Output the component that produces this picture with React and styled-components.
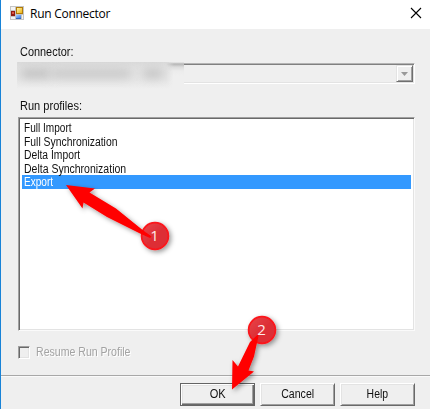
import React from 'react';
import styled, { createGlobalStyle } from 'styled-components';

const GlobalStyle = createGlobalStyle`
  * { box-sizing: border-box; }
  body { margin: 0; background: #efefef; overflow: hidden; }
`;

const Dialog = styled.div`
  position: relative;
  display: flex;
  flex-direction: column;
  width: 430px;
  height: 409px;
  border-left: 1px solid #1883d7;
  background: #efefef;
  color: #111;
  font: 12px/14px 'Liberation Sans', Arial, sans-serif;
`;

const TitleBar = styled.header`
  display: flex;
  align-items: center;
  height: 29px;
  padding: 0 8px 3px 9px;
  background: #fff;
`;

const Title = styled.h1`
  flex: 1;
  margin: 2px 0 0 6px;
  color: #000;
  font: 12px/16px 'Open Sans', 'Noto Sans', sans-serif;
  letter-spacing: -0.27px;
`;

const CloseButton = styled.button`
  display: flex;
  padding: 0;
  border: 0;
  background: none;
`;

/* Condensed caption, close to the narrow system face of classic dialogs. */
const Caption = styled.span`
  display: inline-block;
  white-space: nowrap;
  transform: scaleX(${(p) => p.$stretch});
  transform-origin: ${(p) => (p.$centered ? 'center' : 'left')};
`;

const Content = styled.main`
  display: flex;
  flex-direction: column;
  height: 347px;
  padding: 16px 15px 0 17px;
  border-bottom: 1px solid #a8a8a8;
  box-shadow: 0 1px #fafafa;
`;

const Label = styled.div`
  height: 14px;
  padding-left: 2px;
`;

const Combo = styled.div`
  position: relative;
  display: flex;
  justify-content: flex-end;
  height: 21px;
  margin: 4px 0 15px;
  border: 1px solid;
  border-color: #b4b4b4 #fff #fff #a0a0a0;
  box-shadow: inset 1px 1px #808080, inset -1px -1px #e3e3e3;
`;

const ComboArrow = styled.div`
  display: flex;
  align-items: center;
  justify-content: center;
  width: 17px;
  height: 17px;
  margin: 1px 1px 0 0;
  border: 1px solid;
  border-color: #e3e3e3 #6f6f6f #6f6f6f #e3e3e3;
  box-shadow: inset 1px 1px #fff, inset -1px -1px #a0a0a0;
`;

const Redaction = styled.div`
  position: absolute;
  left: -2px;
  top: -2px;
  width: 167px;
  height: 28px;
  overflow: hidden;
  background: linear-gradient(#dadada 0, #e1e1e1 6px, #e6e6e6 18px, #efefef 27px);
`;

const RedactionEdge = styled.div`
  position: absolute;
  right: 0;
  top: 0;
  width: 18px;
  height: 28px;
  background: linear-gradient(#efefef 0, #b5b5b5 2px, #dcdcdc 5px, #ececec 9px, #efefef 14px);
  mask-image: linear-gradient(90deg, transparent, #000 8px);
`;

const Smudge = styled.div`
  position: absolute;
  left: ${(p) => p.$left}px;
  top: 7px;
  width: ${(p) => p.$width}px;
  height: 9px;
  border-radius: 4px;
  background: ${(p) => p.$tone};
  filter: blur(5px);
`;

const List = styled.ul`
  height: 214px;
  margin: 4px 0 0;
  padding: 3px 3px 2px;
  list-style: none;
  border: 1px solid;
  border-color: #a0a0a0 #fafafa #fafafa #a0a0a0;
  background: #fff;
  box-shadow: inset 1px 1px #696969, inset -1px -1px #e3e3e3;
`;

const Item = styled.li`
  height: 13.6px;
  padding-left: 2px;
  line-height: 14px;
  color: ${(p) => (p.$selected ? '#fff' : '#111')};
  background: ${(p) => (p.$selected ? '#3399ff' : 'transparent')};
`;

const CheckRow = styled.label`
  display: flex;
  align-items: center;
  gap: 6px;
  margin-top: 14px;
  color: #a3a3a3;
  text-shadow: 1px 1px #fff;
`;

const CheckBox = styled.span`
  width: 12px;
  height: 13px;
  border: 1px solid;
  border-color: #a0a0a0 #fff #fff #a0a0a0;
  box-shadow: inset 1px 1px #696969, inset -1px -1px #e3e3e3;
`;

const Footer = styled.footer`
  display: flex;
  justify-content: flex-end;
  gap: 5px;
  padding: 7px 15px 0 0;
`;

const Button = styled.button`
  width: 75px;
  height: 23px;
  padding: 0 0 1px;
  border: 1px solid;
  border-color: ${(p) => (p.$primary ? '#646464' : '#fff #696969 #696969 #fff')};
  background: #efefef;
  color: #111;
  font: 12px/14px 'Liberation Sans', Arial, sans-serif;
  box-shadow: ${(p) =>
    p.$primary
      ? 'inset 1px 1px #fff, inset -1px -1px #696969, inset -2px -2px #a0a0a0, inset 2px 2px #e3e3e3'
      : 'inset 1px 1px #e3e3e3, inset -1px -1px #a0a0a0'};
`;

const Annotations = styled.svg`
  position: absolute;
  left: -1px;
  top: 0;
  pointer-events: none;
`;

const profiles = [
  ['Full Import', 0.84],
  ['Full Synchronization', 0.865],
  ['Delta Import', 0.86],
  ['Delta Synchronization', 0.875],
  ['Export', 0.84],
];

function AppIcon() {
  return (
    <svg width="14" height="14" viewBox="0 0 14 14" shapeRendering="crispEdges">
      <defs>
        <linearGradient id="gold" x2="1" y2="1"><stop stopColor="#fff3a8" /><stop offset="1" stopColor="#eeb515" /></linearGradient>
        <linearGradient id="blue" x2="1" y2="1"><stop stopColor="#a9ccff" /><stop offset="1" stopColor="#397ce0" /></linearGradient>
      </defs>
      <path fill="#c4c4c4" d="M0 0h14v14H0z" />
      <path fill="#f4f4f4" d="M1 1h4v3H1zM1 11h4v2H1zM12 9h1v4h-1z" />
      <path fill="#8f1c12" d="M1 5h4v5H1z" />
      <path fill="#dd5544" d="M2 6h2v2H2z" />
      <path fill="#b27b08" d="M6 1h7v7H6z" />
      <path fill="url(#gold)" d="M7 2h5v5H7z" />
      <path fill="#3266bd" d="M6 9h5v4H6z" />
      <path fill="url(#blue)" d="M6 9h5v3H6z" />
    </svg>
  );
}

function Callouts() {
  return (
    <Annotations width="430" height="409" viewBox="0 0 430 409">
      <defs>
        <filter id="shadow" x="-30%" y="-30%" width="170%" height="170%">
          <feDropShadow dx="2" dy="2" stdDeviation="2.5" floodColor="#000" floodOpacity="0.4" />
        </filter>
        <linearGradient id="disc" x2="1" y2="1"><stop stopColor="#e8474c" /><stop offset="0.5" stopColor="#dd2f36" /><stop offset="1" stopColor="#dd2f36" /></linearGradient>
      </defs>
      <g filter="url(#shadow)">
        <circle cx="155" cy="236" r="13.4" fill="url(#disc)" stroke="#fc141a" strokeWidth="1.7" />
        <path fill="#f00" d="M66 185L95 188.5L89.5 192.5L116 208.5L142 229.5L151.5 236.5L150 238L140 233.5L107 217L83.5 202.5L82.5 208.5Z" />
      </g>
      <g filter="url(#shadow)">
        <circle cx="262" cy="330" r="13.4" fill="url(#disc)" stroke="#fc141a" strokeWidth="1.7" />
        <path fill="#f00" d="M232 389.5L232.5 360L238 366.5L250 342L259 333.5L254 356.5L248.5 370.5L254 371.5Z" />
      </g>
      <g fill="#ffe9e9" fontFamily="'Open Sans', 'Noto Sans', sans-serif" fontSize="15" textAnchor="middle">
        <text x="154.5" y="241">1</text>
        <text x="261.5" y="335">2</text>
      </g>
    </Annotations>
  );
}

export default function App() {
  return (
    <>
      <GlobalStyle />
      <Dialog>
        <TitleBar>
          <AppIcon />
          <Title>Run Connector</Title>
          <CloseButton aria-label="Close">
            <svg width="12" height="12" viewBox="0 0 12 12">
              <path d="M1 1l10 10M11 1L1 11" stroke="#000" strokeWidth="1.1" />
            </svg>
          </CloseButton>
        </TitleBar>
        <Content>
          <Label><Caption $stretch={0.91}>Connector:</Caption></Label>
          <Combo>
            <ComboArrow>
              <svg width="7" height="4" viewBox="0 0 7 4"><path d="M0 0h7L3.5 4z" fill="#999" /></svg>
            </ComboArrow>
            <Redaction>
              <RedactionEdge />
              <Smudge $left={4} $width={30} $tone="#c0c0c0" />
              <Smudge $left={34} $width={80} $tone="#c8c8c8" />
              <Smudge $left={126} $width={20} $tone="#c4c4c4" />
            </Redaction>
          </Combo>
          <Label><Caption $stretch={0.92}>Run profiles:</Caption></Label>
          <List>
            {profiles.map(([name, stretch]) => (
              <Item key={name} $selected={name === 'Export'}>
                <Caption $stretch={stretch}>{name}</Caption>
              </Item>
            ))}
          </List>
          <CheckRow><CheckBox /><Caption $stretch={0.88}>Resume Run Profile</Caption></CheckRow>
        </Content>
        <Footer>
          <Button $primary><Caption $centered $stretch={0.92}>OK</Caption></Button>
          <Button><Caption $centered $stretch={0.88}>Cancel</Caption></Button>
          <Button><Caption $centered $stretch={0.87}>Help</Caption></Button>
        </Footer>
        <Callouts />
      </Dialog>
    </>
  );
}
